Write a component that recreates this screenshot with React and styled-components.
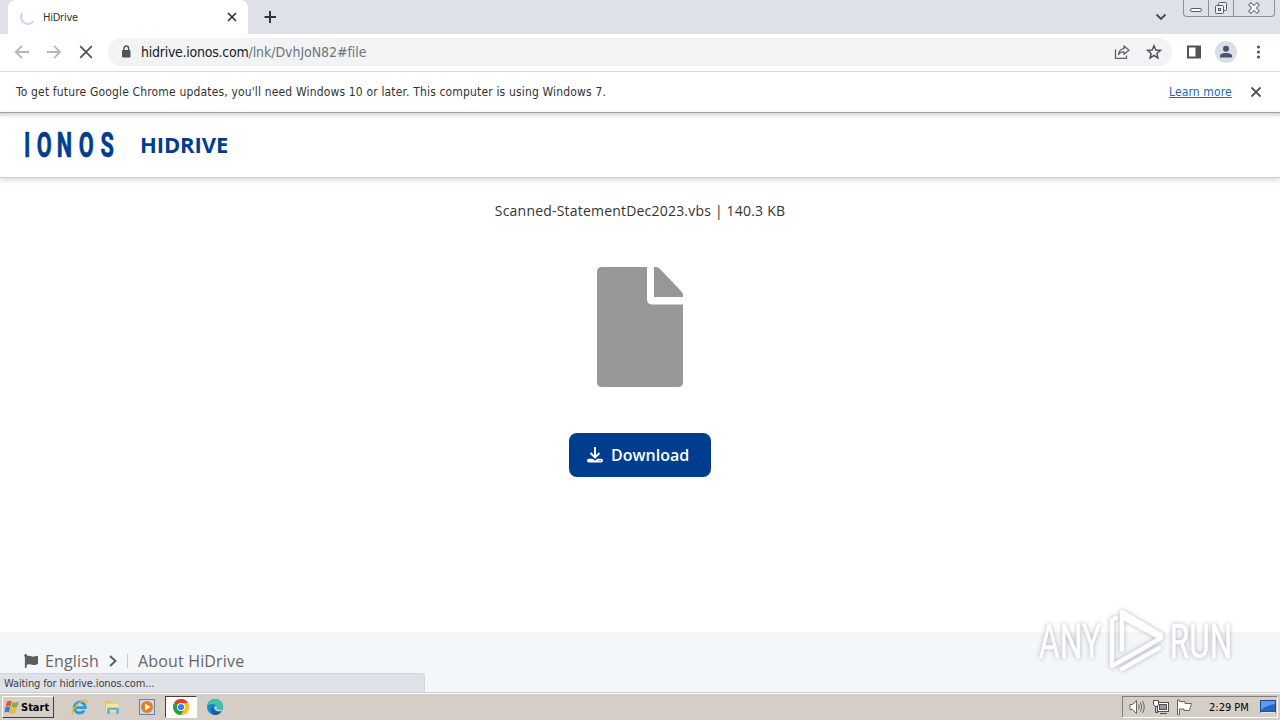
import { createGlobalStyle, styled } from 'styled-components';
import { FaFlag } from 'react-icons/fa';


const GlobalStyle = createGlobalStyle`
  * {
    box-sizing: border-box;
  }
  body {
    margin: 0;
    overflow: hidden;
    background-color: #fff;
  }
  svg {
    display: block;
    flex-shrink: 0;
  }
`
const Desktop = styled.div`
  display: flex;
  flex-direction: column;
  width: 1280px;
  height: 720px;
  overflow: hidden;
  font-family: 'DejaVu Sans Condensed', 'DejaVu Sans', sans-serif;
  font-stretch: condensed;
  color: #333;
`
const Label = styled.span`
  display: block;
  flex-shrink: 0;
  width: ${props => props.$width ? `${props.$width}px` : 'auto'};
  font-size: ${props => props.$size || 11}px;
  font-weight: ${props => props.$weight || 400};
  letter-spacing: ${props => props.$spacing || 0}px;
  color: ${props => props.$color || 'inherit'};
  white-space: nowrap;
`

/* Janela do navegador */
const TabStrip = styled.div`
  display: flex;
  height: 34px;
  padding-left: 8px;
  background-color: #dee1e8;
`
const Tab = styled.div`
  display: flex;
  align-items: center;
  width: 240px;
  height: 34px;
  padding: 0 10px 0 12px;
  background-color: #fff;
  border-radius: 8px 8px 0 0;
`
const TabTitle = styled.div`
  flex: 1;
  padding-left: 7px;
`
const NewTab = styled.div`
  flex: 1;
  padding: 10px 0 0 15px;
`
const TabSearch = styled.div`
  padding: 12px 16px 0 0;
`
const WindowButtons = styled.div`
  display: flex;
  width: 92px;
  height: 17px;
  margin-right: 5px;
  border: 1px solid #8b8f98;
  border-top: 0;
  border-radius: 0 0 4px 4px;
`
const WindowButton = styled.div`
  display: flex;
  align-items: center;
  justify-content: center;
  width: ${props => props.$width}px;
  border-right: ${props => props.$last ? '0' : '1px solid #8b8f98'};
`
const Toolbar = styled.div`
  display: flex;
  align-items: center;
  height: 38px;
  padding: 0 0 1px 14px;
  border-bottom: 1px solid #dadce0;
  background-color: #fff;
`
const NavButtons = styled.div`
  display: flex;
  gap: 16px;
  width: 94px;
`
const AddressBar = styled.div`
  display: flex;
  align-items: center;
  width: 1064px;
  height: 28px;
  padding: 0 10px 0 12px;
  border-radius: 14px;
  background-color: #f1f3f4;
`
const Address = styled.div`
  flex: 1;
  display: flex;
  padding-left: 9px;
`
const AddressIcons = styled.div`
  display: flex;
  gap: 16px;
`
const ToolbarIcons = styled.div`
  display: flex;
  align-items: center;
  gap: 13px;
  padding-left: 14px;
`
const InfoBar = styled.div`
  display: flex;
  align-items: center;
  height: 41px;
  padding: 0 16px;
  border-bottom: 1px solid #a9a9a9;
  background-color: #fff;
`
const InfoText = styled.div`
  flex: 1;
`
const LearnMore = styled.a`
  width: 63px;
  margin-right: 16px;
  font-size: 12px;
  letter-spacing: 0.12px;
  white-space: nowrap;
  color: #1a66c9;
  text-decoration: underline;
`

/* Página */
const Page = styled.div`
  position: relative;
  display: flex;
  flex-direction: column;
  height: 579px;
  font-family: 'Open Sans', 'Noto Sans', sans-serif;
  font-stretch: normal;
  background-color: #fff;
`
const Header = styled.header`
  display: flex;
  align-items: center;
  height: 65px;
  padding: 0 0 2px 24px;
  gap: 23px;
  border-bottom: 1px solid #c5ccd8;
  background-image: linear-gradient(#d4d4d4, #eee 3px, #fff 6px);
  box-shadow: 0 2px 6px rgba(0, 20, 60, 0.16);
`
const Logo = styled.svg`
  overflow: visible;
`
const Product = styled.h1`
  margin: 0;
  font-size: 22px;
  line-height: 30px;
  font-weight: 700;
  letter-spacing: -0.1px;
  color: #003d8f;
`
const Main = styled.main`
  flex: 1;
  display: flex;
  flex-direction: column;
  align-items: center;
  padding-top: 22px;
`
const FileName = styled.p`
  height: 22px;
  margin: 0 0 45px 0;
  font-size: 14px;
  line-height: 22px;
  letter-spacing: 0.2px;
  white-space: nowrap;
  color: #333;
`
const DownloadButton = styled.button`
  display: flex;
  align-items: center;
  width: 142px;
  height: 44px;
  margin-top: 46px;
  padding: 0 0 0 18px;
  gap: 8px;
  border: 0;
  border-radius: 8px;
  font-family: inherit;
  font-size: 16px;
  font-weight: 600;
  letter-spacing: 0;
  color: #fff;
  background-color: #003d8f;
`
const Footer = styled.footer`
  display: flex;
  align-items: flex-start;
  height: 60px;
  padding: 18px 0 0 24px;
  font-size: 16px;
  line-height: 22px;
  letter-spacing: 0.16px;
  color: #666;
  background-color: #f4f7fa;

  svg {
    margin-top: 4px;
  }
`
const FooterLink = styled.span`
  margin: 0 9px 0 7px;
  white-space: nowrap;
`
const Divider = styled.span`
  width: 1px;
  height: 14px;
  margin: 4px 3px 0 9px;
  background-color: #ccc;
`
const StatusBubble = styled.div`
  position: absolute;
  left: 0;
  bottom: 0;
  display: flex;
  align-items: center;
  width: 425px;
  height: 19px;
  padding: 1px 0 0 4px;
  border-top: 1px solid #d3d6dd;
  border-right: 1px solid #d3d6dd;
  border-radius: 0 4px 0 0;
  font-family: 'DejaVu Sans Condensed', 'DejaVu Sans', sans-serif;
  font-stretch: condensed;
  color: #3c4043;
  background-color: #dee1e8;
`
const Watermark = styled.svg`
  position: absolute;
  left: 1030px;
  bottom: 12px;
  opacity: 0.85;
  filter: drop-shadow(0 0 2px rgba(70, 80, 90, 0.5));
`

/* Barra de tarefas */
const Taskbar = styled.div`
  display: flex;
  align-items: center;
  height: 28px;
  padding: 1px 2px 0 2px;
  border-top: 1px solid #d5cec6;
  box-shadow: inset 0 1px 0 #fff;
  background-color: #d5cec6;
`
const StartButton = styled.div`
  display: flex;
  align-items: center;
  gap: 1px;
  width: 52px;
  height: 22px;
  padding-left: 1px;
  border: 1px solid #fff;
  border-right-color: #404040;
  border-bottom-color: #404040;
  color: #000;
`
const QuickLaunch = styled.div`
  flex: 1;
  display: flex;
  align-items: center;
  padding-left: 8px;
`
const TaskItem = styled.div`
  display: flex;
  align-items: center;
  justify-content: center;
  width: ${props => props.$active ? 32 : 34}px;
  height: 22px;
  margin: 0 ${props => props.$active ? 1 : 0}px;
  border: 1px solid ${props => props.$active ? '#fff' : 'transparent'};
  border-top-color: ${props => props.$active ? '#404040' : 'transparent'};
  border-left-color: ${props => props.$active ? '#404040' : 'transparent'};
  background-color: ${props => props.$active ? '#fff' : 'transparent'};

  &:first-child {
    margin-right: -1px;
  }
  &:nth-child(2) {
    margin-right: 1px;
  }
`
const Tray = styled.div`
  display: flex;
  align-items: center;
  width: 156px;
  height: 22px;
  padding-left: 6px;
  border: 1px solid #808080;
  border-right-color: #fff;
  border-bottom-color: #fff;
  color: #000;
`
const TrayIcons = styled.div`
  display: flex;
  gap: 7px;
  width: 80px;
`

function ArrowIcon({ flip }) {
  return (
    <svg width="16" height="16" viewBox="0 0 16 16" fill="none" stroke="#b4b6b9" strokeWidth="1.8">
      <path d={flip ? 'M1 8H14M8 1.8L14.2 8L8 14.2' : 'M15 8H2M8 1.8L1.8 8L8 14.2'} />
    </svg>
  );
}

function Browser() {
  return (
    <>
      <TabStrip>
        <Tab>
          <svg width="16" height="16" viewBox="0 0 16 16" fill="none" stroke="#c5d6f5" strokeWidth="2">
            <path d="M2.2 4.2A6.8 6.8 0 0 0 13.5 12" />
          </svg>
          <TabTitle><Label $spacing={-0.25}>HiDrive</Label></TabTitle>
          <svg width="12" height="12" viewBox="0 0 12 12" stroke="#333" strokeWidth="1.7">
            <path d="M2 2L10 10M10 2L2 10" />
          </svg>
        </Tab>
        <NewTab>
          <svg width="14" height="14" viewBox="0 0 14 14" stroke="#33363b" strokeWidth="2">
            <path d="M1.5 7H13M7 1V13" />
          </svg>
        </NewTab>
        <TabSearch>
          <svg width="12" height="10" viewBox="0 0 12 10" fill="none" stroke="#45484d" strokeWidth="1.8">
            <path d="M1.5 2.5L6 7L10.5 2.5" />
          </svg>
        </TabSearch>
        <WindowButtons>
          <WindowButton $width={25}>
            <svg width="14" height="16" viewBox="0 0 14 16" fill="#fff" stroke="#555a63">
              <rect x="1.5" y="8.5" width="11" height="3" rx="1.5" />
            </svg>
          </WindowButton>
          <WindowButton $width={25}>
            <svg width="14" height="14" viewBox="0 0 14 14" fill="#eceef2" stroke="#555a63">
              <rect x="4.5" y="1.5" width="8" height="8" rx="1" />
              <rect x="1.5" y="4.5" width="8" height="8" rx="1" />
              <rect x="4.5" y="7.5" width="2" height="2" />
            </svg>
          </WindowButton>
          <WindowButton $width={40} $last>
            <svg width="14" height="12" viewBox="0 0 14 12">
              <path d="M2.5 1.5L11.5 10.5M11.5 1.5L2.5 10.5" stroke="#555a63" strokeWidth="4" />
              <path d="M3.2 2.2L10.8 9.8M10.8 2.2L3.2 9.8" stroke="#fff" strokeWidth="2.4" />
            </svg>
          </WindowButton>
        </WindowButtons>
      </TabStrip>
      <Toolbar>
        <NavButtons>
          <ArrowIcon />
          <ArrowIcon flip />
          <svg width="16" height="16" viewBox="0 0 16 16" stroke="#505357" strokeWidth="1.8">
            <path d="M2.2 2.2L13.8 13.8M13.8 2.2L2.2 13.8" />
          </svg>
        </NavButtons>
        <AddressBar>
          <svg width="12" height="14" viewBox="0 0 12 14">
            <rect x="2" y="5" width="8.5" height="7.5" rx="1" fill="#505357" />
            <path d="M3.9 5.5V3.4a2.35 2.35 0 0 1 4.7 0V5.5" fill="none" stroke="#505357" strokeWidth="1.4" />
          </svg>
          <Address>
            <Label $size={14} $spacing={-0.25} $color="#202124">hidrive.ionos.com</Label>
            <Label $size={14} $spacing={-0.06} $color="#70757a">/lnk/DvhJoN82#file</Label>
          </Address>
          <AddressIcons>
            <svg width="16" height="16" viewBox="0 0 16 16" fill="none" stroke="#5f6368" strokeWidth="1.3">
              <path d="M1.5 5.5V14.3H12.5V11.5" />
              <path d="M10 2L15 6.2L10 10.2V7.8C7.5 7.7 5.8 8.5 4.5 10.5C4.9 7.3 6.8 5 10 4.6Z" strokeLinejoin="round" />
            </svg>
            <svg width="16" height="16" viewBox="0 0 16 16" fill="none" stroke="#505357" strokeWidth="1.5">
              <path d="M8 1.8L9.8 6L14.3 6.4L10.9 9.4L11.9 13.9L8 11.5L4.1 13.9L5.1 9.4L1.7 6.4L6.2 6Z" />
            </svg>
          </AddressIcons>
        </AddressBar>
        <ToolbarIcons>
          <svg width="16" height="16" viewBox="0 0 16 16">
            <rect x="2" y="2.5" width="12" height="11" fill="none" stroke="#505357" strokeWidth="2" />
            <rect x="9.5" y="2" width="5" height="12" fill="#505357" />
          </svg>
          <svg width="22" height="22" viewBox="0 0 22 22" fill="#47536b">
            <circle cx="11" cy="11" r="11" fill="#dadee5" />
            <circle cx="11" cy="7.8" r="3" />
            <path d="M5 16.5V14.8C5 12.8 8.5 12 11 12S17 12.8 17 14.8V16.5Z" />
          </svg>
          <svg width="16" height="16" viewBox="0 0 16 16" fill="#505357">
            <circle cx="8.5" cy="3" r="1.6" />
            <circle cx="8.5" cy="8" r="1.6" />
            <circle cx="8.5" cy="13" r="1.6" />
          </svg>
        </ToolbarIcons>
      </Toolbar>
      <InfoBar>
        <InfoText>
          <Label $size={12} $spacing={0.16}>
            To get future Google Chrome updates, you'll need Windows 10 or later. This computer is using Windows 7.
          </Label>
        </InfoText>
        <LearnMore>Learn more</LearnMore>
        <svg width="16" height="16" viewBox="0 0 16 16" stroke="#505357" strokeWidth="1.8">
          <path d="M3.5 3.5L12.5 12.5M12.5 3.5L3.5 12.5" />
        </svg>
      </InfoBar>
    </>
  );
}

function HiDrive() {
  return (
    <Page>
      <Header>
        <Logo width="93" height="46" viewBox="0 0 93 46" fill="#003d8f">
          <text
            transform="translate(0 36) scale(0.62 1)"
            x="0 20.5 53 88.5 123.5"
            fontFamily="Roboto, sans-serif"
            fontSize="35"
            fontWeight="700"
            stroke="#003d8f"
            strokeWidth="0.7"
            strokeLinejoin="round"
          >
            IONOS
          </text>
        </Logo>
        <Product>HIDRIVE</Product>
      </Header>
      <Main>
        <FileName>Scanned-StatementDec2023.vbs | 140.3 KB</FileName>
        <svg width="86" height="120" viewBox="0 0 86 120" fill="#979797">
          <path d="M5 0H50V32Q50 37.5 55.5 37.5H86V115Q86 120 81 120H5Q0 120 0 115V5Q0 0 5 0Z" />
          <path d="M57 0H59Q61 0 63 2L84 24Q86 26 86 28V30H57Z" />
        </svg>
        <DownloadButton>
          <svg width="16" height="16" viewBox="0 0 16 16" fill="none" stroke="#fff">
            <path d="M1.9 13.6H14.1" strokeWidth="3.8" strokeLinecap="round" />
            <path d="M4 9.5L8 13L12 9.5" stroke="#003d8f" strokeWidth="1.2" />
            <path d="M8 0V10M3.5 6L8 10.4L12.5 6" strokeWidth="2" />
            <circle cx="13" cy="13.7" r=".7" fill="#003d8f" stroke="none" />
          </svg>
          Download
        </DownloadButton>
      </Main>
      <Footer>
        <FaFlag size={14} color="#5c5c5c" />
        <FooterLink>English</FooterLink>
        <svg width="10" height="14" viewBox="0 0 10 14" fill="none" stroke="#5c5c5c" strokeWidth="2">
          <path d="M2 2L7.5 7L2 12" />
        </svg>
        <Divider />
        <FooterLink>About HiDrive</FooterLink>
      </Footer>
      <Watermark width="214" height="72" viewBox="0 0 214 72" fill="#fff">
        <g stroke="#fff" strokeWidth="0.6" fontFamily="Roboto, sans-serif" fontSize="49">
          <text x="14" y="50" transform="scale(.63 1)" textLength="99" lengthAdjust="spacingAndGlyphs">ANY</text>
          <text x="222" y="50" transform="scale(.63 1)" textLength="99" lengthAdjust="spacingAndGlyphs">RUN</text>
        </g>
        <g fill="none" stroke="#fff" strokeWidth="4.5" strokeLinecap="round" strokeLinejoin="round">
          <path d="M92 42V4L131 27" />
          <path d="M86 10L82 12V58L131 30L92 9" />
          <path d="M92 61L129 40" />
        </g>
      </Watermark>
      <StatusBubble><Label $spacing={-0.12}>Waiting for hidrive.ionos.com...</Label></StatusBubble>
    </Page>
  );
}

function WindowsBar() {
  return (
    <Taskbar>
      <StartButton>
        <svg width="16" height="16" viewBox="0 0 15 16">
          <path d="M2.5 2.5Q5 .8 7.3 2.5L6 7.5Q3.5 6 1 7.5Z" fill="#e8552b" />
          <path d="M8 3Q11 4.5 14.3 2.5L12.5 7.8Q10 9.5 6.8 8Z" fill="#79b63a" />
          <path d="M.8 8.2Q3.5 7 5.8 8.2L4.5 13.5Q2 12 0 13.5Z" fill="#3a7fd0" />
          <path d="M6.5 8.9Q9.5 10.3 12.3 8.6L11 13.6Q8 15.5 5.2 14Z" fill="#f7b72b" />
        </svg>
        <Label $weight={700}>Start</Label>
      </StartButton>
      <QuickLaunch>
        <TaskItem>
          <svg width="17" height="17" viewBox="0 0 17 17" fill="none">
            <path d="M13.3 11.5A5.5 5.5 0 1 1 14.2 8.7H5" stroke="#2e9bdc" strokeWidth="2.8" />
            <path d="M2 15.5C-2 12 11-1 15.5 1.5Q16.5 2.5 14.5 5" stroke="#e6b637" strokeWidth="1.4" />
          </svg>
        </TaskItem>
        <TaskItem>
          <svg width="16" height="16" viewBox="0 0 16 16">
            <path d="M1 2H6L7.5 3.5H13V11H1Z" fill="#e5c45c" />
            <rect x="2" y="4.5" width="12.5" height="8" fill="#f8e59a" />
            <path d="M3 15V10Q3 8.5 5 8.5H13Q15 8.5 15 10V15H12V11H6V15Z" fill="#67b3dc" />
          </svg>
        </TaskItem>
        <TaskItem>
          <svg width="16" height="16" viewBox="0 0 16 16">
            <rect x=".5" y=".5" width="15" height="15" fill="#c5dcf0" stroke="#5689b8" />
            <circle cx="8" cy="8" r="6" fill="#ef7a16" />
            <path d="M6 4.5L11.5 8L6 11.5Z" fill="#fff" />
          </svg>
        </TaskItem>
        <TaskItem $active>
          <svg width="16" height="16" viewBox="0 0 16 16">
            <circle cx="8" cy="8" r="8" fill="#fbc116" />
            <path d="M8 8L1.07 4A8 8 0 0 1 14.93 4H8Z" fill="#e33b2e" />
            <path d="M8 8L1.07 4A8 8 0 0 0 8 16L11.5 10Z" fill="#269f4b" />
            <path d="M8 4H14.93A8 8 0 0 1 8 16L11.46 10Z" fill="#fbc116" />
            <circle cx="8" cy="8" r="4" fill="#fff" />
            <circle cx="8" cy="8" r="3.1" fill="#3f7fe8" />
          </svg>
        </TaskItem>
        <TaskItem>
          <svg width="16" height="16" viewBox="0 0 16 16">
            <circle cx="8" cy="8" r="8" fill="#1686cf" />
            <path d="M0 7C1 1 7-.8 11 .6C15 2 17 6 15.5 9C14 11 10 10.5 10 9C11 6 5 3 0 7Z" fill="#3fc6a0" />
            <path d="M6 7.5C5 11 9 14 14.5 12Q12 16 8 16C4 15 3 10 6 7.5Z" fill="#0c5ca8" />
            <path d="M7.5 7.5Q9 6.5 10 8C9 10 11 11.5 15.5 10L14.5 12C10 13 7 11 7.5 7.5Z" fill="#d5cec6" />
          </svg>
        </TaskItem>
      </QuickLaunch>
      <Tray>
        <TrayIcons>
          <svg width="17" height="16" viewBox="0 0 17 16" fill="none" stroke="#666">
            <path d="M1 5.5H3.5L7.5 1.5V14.5L3.5 10.5H1Z" fill="#fff" />
            <path d="M9.5 5.5Q11 8 9.5 10.5M11.5 3.5Q14 8 11.5 12.5M13.5 2Q17 8 13.5 14" />
          </svg>
          <svg width="16" height="16" viewBox="0 0 16 16" stroke="#4f4f4f">
            <rect x="4.5" y="3.5" width="11" height="9" fill="#fff" />
            <rect x="6.5" y="5.5" width="7" height="5" fill="#999" />
            <path d="M7 14.5H14M2.5 6.5V13.5H5" fill="none" />
            <path d="M.5 1.5H5.5V5.5L4 7.5H2L.5 5.5Z" fill="#fff" />
          </svg>
          <svg width="17" height="16" viewBox="0 0 17 16" fill="#fff" stroke="#666">
            <path d="M1.5 1V15.5H3.5V10H8V11.5H13.5L15.5 4.5H9V2.5H3.5V1Z" />
          </svg>
        </TrayIcons>
        <Label $width={51}>2:29 PM</Label>
        <svg width="16" height="14" viewBox="0 0 16 14">
          <rect x=".5" y=".5" width="15" height="11.5" fill="#2465c4" stroke="#174a94" />
          <path d="M1 1H15V4Q8 5 1 10Z" fill="#5b9cec" />
          <path d="M1 12.5H15" stroke="#d9e9f7" />
        </svg>
      </Tray>
    </Taskbar>
  );
}


export default function App() {
  return (
    <Desktop>
      <GlobalStyle />
      <Browser />
      <HiDrive />
      <WindowsBar />
    </Desktop>
  );
}
